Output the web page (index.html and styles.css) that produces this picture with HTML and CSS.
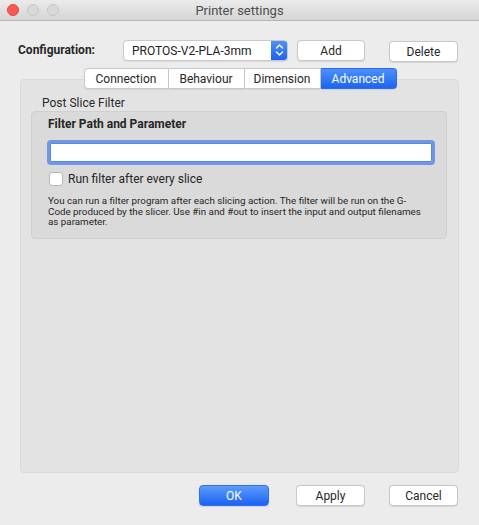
FILE: index.html
```html
<!DOCTYPE html>
<html>
<head>
<meta charset="utf-8">
<link rel="stylesheet" href="styles.css">
</head>
<body>
<div class="window">
  <div class="titlebar">
    <div class="lights">
      <span class="light red"></span>
      <span class="light grey"></span>
      <span class="light grey"></span>
    </div>
    <div class="title">Printer settings</div>
  </div>
  <div class="config-row">
    <span class="config-label">Configuration:</span>
    <div class="popup">
      <span class="popup-text">PROTOS-V2-PLA-3mm</span>
      <span class="popup-arrows">
        <svg width="9" height="14" viewBox="0 0 9 14"><path d="M1.5 5 L4.5 2 L7.5 5 M1.5 9 L4.5 12 L7.5 9" fill="none" stroke="#fff" stroke-width="1.4" stroke-linecap="round" stroke-linejoin="round"/></svg>
      </span>
    </div>
    <div class="btn btn-add">Add</div>
    <div class="btn btn-delete">Delete</div>
  </div>
  <div class="tabs">
    <div class="tab tab-conn">Connection</div>
    <div class="tab">Behaviour</div>
    <div class="tab">Dimension</div>
    <div class="tab active">Advanced</div>
  </div>
  <div class="panel">
    <div class="section-label">Post Slice Filter</div>
    <div class="group">
      <div class="group-title">Filter Path and Parameter</div>
      <div class="field"></div>
      <div class="check-row">
        <span class="checkbox"></span>
        <span class="check-label">Run filter after every slice</span>
      </div>
      <p class="help">You can run a filter program after each slicing action. The filter will be run on the G-<br>Code produced by the slicer. Use #in and #out to insert the input and output filenames<br>as parameter.</p>
    </div>
  </div>
  <div class="bottom-row">
    <div class="btn btn-ok">OK</div>
    <div class="btn btn-apply">Apply</div>
    <div class="btn btn-cancel">Cancel</div>
  </div>
</div>
</body>
</html>
```
FILE: styles.css
```css
* { box-sizing: border-box; }
html, body { margin: 0; padding: 0; }
body {
  width: 479px;
  height: 525px;
  background: #ececec;
  font-family: "Roboto", "Liberation Sans", sans-serif;
  color: #262626;
  overflow: hidden;
}
.window {
  width: 479px;
  height: 525px;
  display: flex;
  flex-direction: column;
}
.titlebar {
  height: 21px;
  flex: none;
  background: linear-gradient(#ebebeb, #d5d5d5);
  border-bottom: 1px solid #b4b4b4;
  display: flex;
  align-items: center;
  position: relative;
}
.lights {
  display: flex;
  gap: 8px;
  padding-left: 7px;
}
.light {
  width: 12px;
  height: 12px;
  border-radius: 50%;
  display: block;
}
.light.red { background: #fc5753; border: 1px solid #df4744; }
.light.grey { background: #d9d9d9; border: 1px solid #c6c6c6; }
.title {
  position: absolute;
  left: 0;
  right: 0;
  top: 0;
  line-height: 21px;
  text-align: center;
  font-size: 13px;
  color: #4d4d4d;
  pointer-events: none;
}
.config-row {
  display: flex;
  align-items: center;
  height: 24px;
  margin: 17px 0 0 18px;
}
.config-label {
  font-weight: 700;
  font-size: 12px;
  width: 105px;
  color: #262626;
}
.popup {
  width: 165px;
  height: 21px;
  background: #fff;
  border: 1px solid #c9c9c9;
  border-radius: 4px;
  display: flex;
  align-items: stretch;
  overflow: hidden;
  box-shadow: 0 0.5px 1px rgba(0,0,0,0.08);
}
.popup-text {
  flex: 1;
  font-size: 12px;
  line-height: 19px;
  padding-top: 1px;
  padding-left: 8px;
  color: #222;
}
.popup-arrows {
  width: 16px;
  background: linear-gradient(#4f91fb, #1b63f2);
  display: flex;
  align-items: center;
  justify-content: center;
}
.btn {
  height: 21px;
  background: #fff;
  border: 1px solid #c8c8c8;
  border-radius: 4px;
  font-size: 12px;
  line-height: 18px;
  padding-top: 1px;
  text-align: center;
  color: #262626;
  box-shadow: 0 0.5px 1px rgba(0,0,0,0.1);
}
.btn-add { width: 68px; margin-left: 9px; }
.btn-delete { width: 69px; margin-left: 24px; margin-top: 2px; }
.tabs {
  display: flex;
  justify-content: center;
  margin: 6px 0 -10px 0;
  padding-left: 1px;
  position: relative;
  z-index: 1;
}
.tab {
  width: 76px;
  height: 21px;
  background: #fff;
  border: 1px solid #c8c8c8;
  border-left: none;
  font-size: 12px;
  line-height: 18px;
  padding-top: 1px;
  text-align: center;
  color: #262626;
  box-shadow: 0 0.5px 1px rgba(0,0,0,0.08);
}
.tab-conn {
  width: 85px;
  border-left: 1px solid #c8c8c8;
  border-radius: 4px 0 0 4px;
}
.tab.active {
  background: linear-gradient(#4d8ff9, #1c65f2);
  border-color: #2a6bef;
  color: #fff;
  border-radius: 0 4px 4px 0;
}
.panel {
  margin: 0 20px 0 20px;
  height: 394px;
  flex: none;
  background: #e3e3e3;
  border: 1px solid #dadada;
  border-radius: 4px;
  padding: 16px 10px 0 10px;
}
.section-label {
  font-size: 12px;
  line-height: 15px;
  padding-left: 11px;
  color: #2a2a2a;
}
.group {
  width: 416px;
  background: #dadada;
  border: 1px solid #d0d0d0;
  border-radius: 4px;
  padding: 5px 12px 10px 16px;
}
.group-title {
  font-size: 12px;
  font-weight: 700;
  line-height: 15px;
  color: #262626;
}
.field {
  margin-top: 8px;
  margin-left: -1px;
  width: 388px;
  height: 25px;
  background: #fff;
  border: 3px solid #6f97e7;
  border-radius: 4px;
  box-shadow: inset 0 0 0 1px #5f88dd;
}
.check-row {
  display: flex;
  align-items: center;
  margin-top: 7px;
  height: 14px;
}
.checkbox {
  width: 14px;
  height: 14px;
  margin-left: 1px;
  background: #fff;
  border: 1px solid #b9b9b9;
  border-radius: 3px;
  display: block;
}
.check-label {
  font-size: 12px;
  margin-left: 5px;
  color: #262626;
}
.help {
  margin: 10px 0 0 0;
  font-size: 9.8px;
  line-height: 10.6px;
  white-space: nowrap;
  color: #262626;
}
.bottom-row {
  display: flex;
  justify-content: flex-end;
  margin: 12px 21px 0 0;
}
.btn-ok {
  width: 70px;
  background: linear-gradient(#5d9cfb, #1a63f4);
  border-color: #2c6ef0;
  color: #fff;
}
.btn-apply { width: 69px; margin-left: 27px; }
.btn-cancel { width: 69px; margin-left: 24px; }
```
